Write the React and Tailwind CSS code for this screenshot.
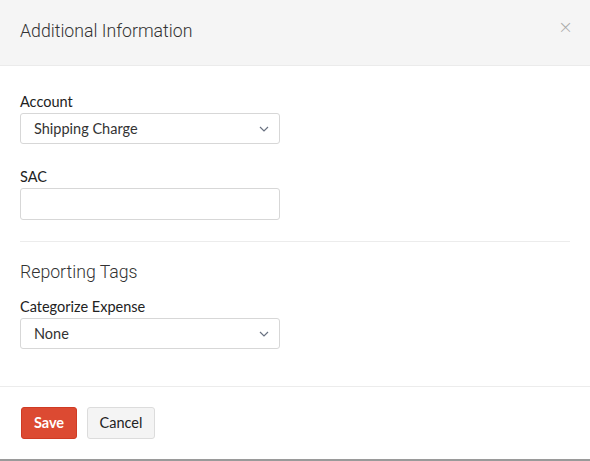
import React from 'react';

function Chevron() {
  return (
    <svg width="10" height="6" viewBox="0 0 10 6" className="text-gray-500">
      <path d="M1 1l4 4 4-4" fill="none" stroke="currentColor" strokeWidth="1.2" />
    </svg>
  );
}

function SelectBox({ value }) {
  return (
    <div className="flex items-center justify-between w-[260px] h-[31px] border border-[#d7d7d7] rounded-[3px] bg-white pl-[13px] pr-[10px]">
      <span className="text-[14.5px] text-[#333]">{value}</span>
      <Chevron />
    </div>
  );
}

function App() {
  return (
    <div className="w-[590px] h-[461px] bg-white flex flex-col font-['Lato',sans-serif] border-b-2 border-[#9a9a9a]">
      <div className="h-[66px] bg-[#f5f5f5] border-b border-[#ebebeb] flex items-center justify-between pl-[20px] pr-[17px] shrink-0">
        <h2 className="font-['Roboto',sans-serif] font-light text-[17.7px] text-[#333] mt-[-2px]">Additional Information</h2>
        <span className="text-[#aaa] text-[18px] leading-none mt-[-12px] font-['DejaVu_Sans',sans-serif] font-light">×</span>
      </div>

      <div className="flex-1 px-[20px] pt-[26px]">
        <div className="flex flex-col gap-[2px]">
          <label className="text-[14.5px] text-[#222] leading-[19px]">Account</label>
          <SelectBox value="Shipping Charge" />
        </div>

        <div className="flex flex-col gap-[2px] mt-[23px]">
          <label className="text-[14.5px] text-[#222] leading-[19px]">SAC</label>
          <div className="w-[260px] h-[32px] border border-[#d7d7d7] rounded-[3px] bg-white" />
        </div>

        <div className="border-t border-[#ececec] mt-[21px] mb-[18px]" />

        <h3 className="font-['Roboto',sans-serif] font-light text-[17.7px] text-[#333] leading-[24px]">Reporting Tags</h3>

        <div className="flex flex-col gap-[2px] mt-[13px]">
          <label className="text-[14.5px] text-[#222] leading-[19px]">Categorize Expense</label>
          <SelectBox value="None" />
        </div>
      </div>

      <div className="h-[73px] border-t border-[#ececec] flex items-start gap-[10px] px-[21px] pt-[20px] shrink-0">
        <button className="h-[32px] w-[56px] bg-[#dc4a32] border border-[#cf3b24] rounded-[3px] text-white text-[14.5px] font-bold">Save</button>
        <button className="h-[32px] w-[68px] bg-[#f4f4f4] border border-[#dcdcdc] rounded-[3px] text-[#222] text-[14.5px]">Cancel</button>
      </div>
    </div>
  );
}

export default App;
